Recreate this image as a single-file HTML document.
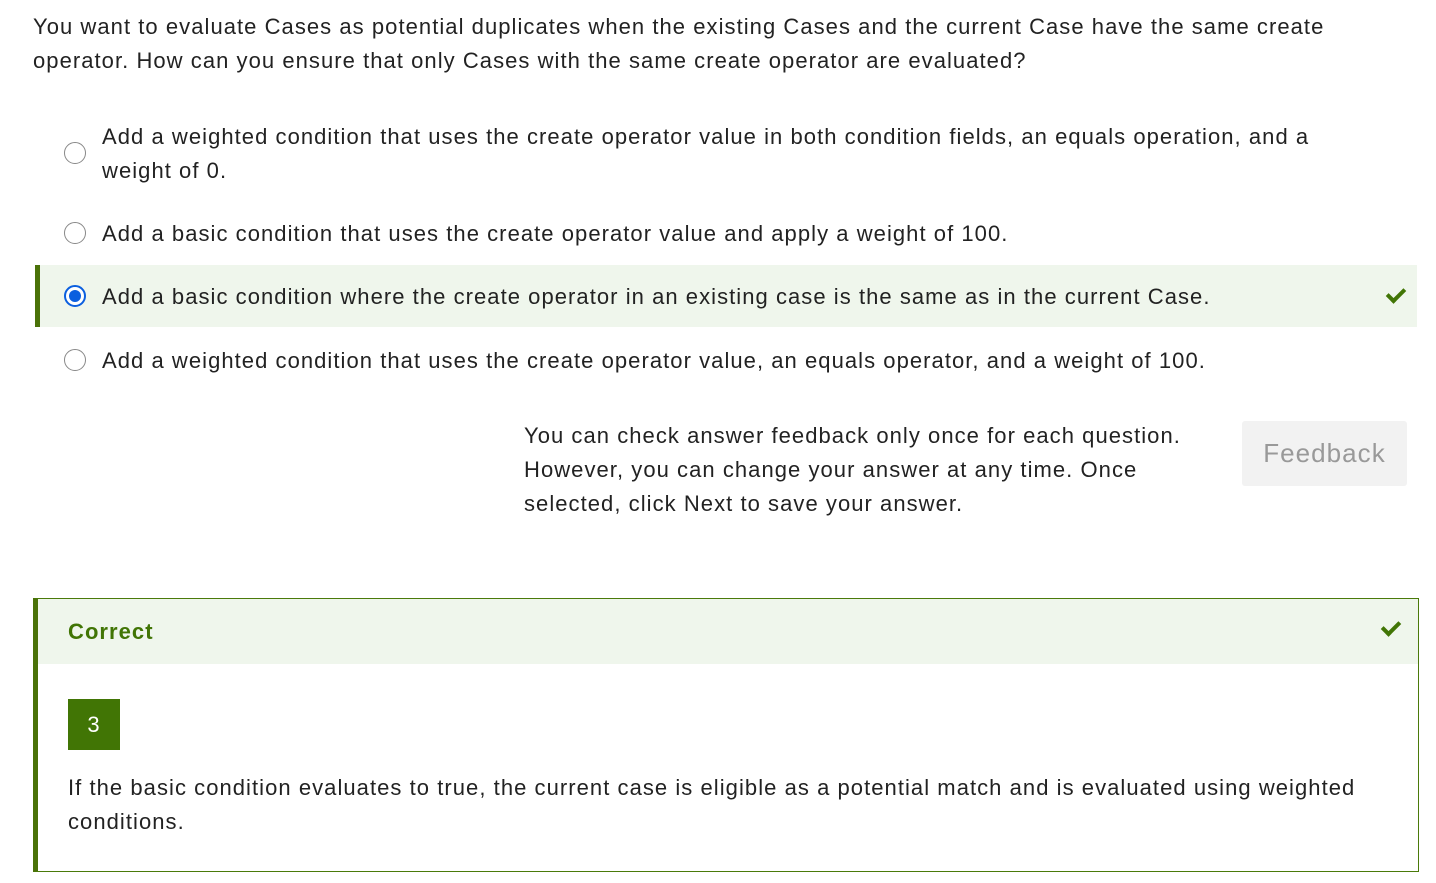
<!DOCTYPE html><html><head><style>
body{margin:0;background:#fff;font-family:"Liberation Sans",sans-serif;color:#222;font-size:22px;letter-spacing:1.05px}
.a{position:absolute}
.q{left:33px;top:10px;width:1330px;line-height:34px}
.opt{position:absolute;left:102px;line-height:34px;width:1240px}
.r{position:absolute;left:64px;width:22px;height:22px;border:1px solid #888;border-radius:50%;box-sizing:border-box;background:#fff}
.ck{position:absolute;width:14px;height:7px;border-left:4px solid #417505;border-bottom:4px solid #417505;transform:rotate(-45deg)}
</style></head><body>
<div class="a q">You want to evaluate Cases as potential duplicates when the existing Cases and the current Case have the same create operator. How can you ensure that only Cases with the same create operator are evaluated?</div>
<div class="r" style="top:142px"></div>
<div class="opt" style="top:120px">Add a weighted condition that uses the create operator value in both condition fields, an equals operation, and a weight of 0.</div>
<div class="r" style="top:222px"></div>
<div class="opt" style="top:217px">Add a basic condition that uses the create operator value and apply a weight of 100.</div>
<div class="a" style="left:35px;top:265px;width:1382px;height:62px;background:#eff6ec;border-left:5px solid #4a7208;box-sizing:border-box"></div>
<div class="r" style="top:285px;border:2px solid #0b5fdf;"><div style="position:absolute;left:3px;top:3px;width:12px;height:12px;border-radius:50%;background:#0b5fdf"></div></div>
<div class="opt" style="top:280px">Add a basic condition where the create operator in an existing case is the same as in the current Case.</div>
<div class="ck" style="left:1387px;top:288px"></div>
<div class="r" style="top:349px"></div>
<div class="opt" style="top:344px">Add a weighted condition that uses the create operator value, an equals operator, and a weight of 100.</div>
<div class="a" style="left:524px;top:419px;width:680px;line-height:34px">You can check answer feedback only once for each question. However, you can change your answer at any time. Once selected, click Next to save your answer.</div>
<div class="a" style="left:1242px;top:421px;width:165px;height:65px;background:#f2f2f2;border-radius:3px;color:#999;font-size:26px;line-height:65px;text-align:center">Feedback</div>
<div class="a" style="left:33px;top:598px;width:1386px;height:274px;border:1px solid #4a7a0a;border-left:5px solid #4a7208;box-sizing:border-box">
<div style="height:65px;background:#eff6ec;color:#417505;font-weight:bold;line-height:66px;padding-left:30px">Correct</div>
<div class="ck" style="left:1344px;top:22px"></div>
<div class="a" style="left:30px;top:100px;width:52px;height:51px;background:#417505;color:#fff;text-align:center;line-height:51px">3</div>
<div class="a" style="left:30px;top:172px;width:1300px;line-height:34px">If the basic condition evaluates to true, the current case is eligible as a potential match and is evaluated using weighted conditions.</div>
</div>
</body></html>
